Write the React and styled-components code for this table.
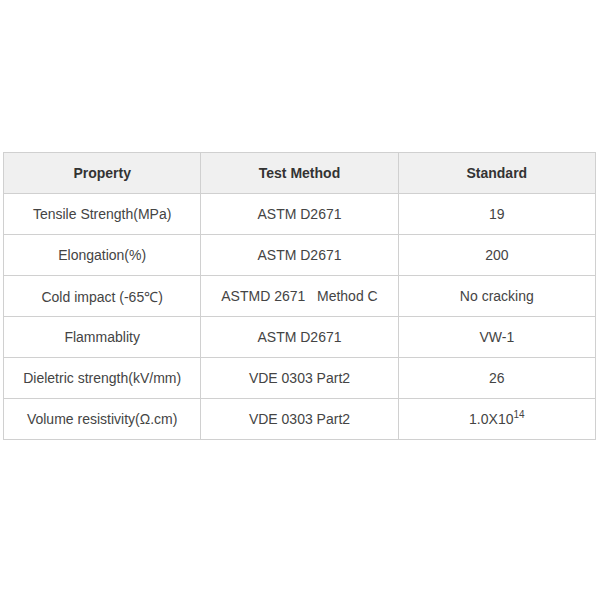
import React from "react";
import styled, { createGlobalStyle } from "styled-components";

const GlobalStyle = createGlobalStyle`
  body {
    margin: 0;
    background: #ffffff;
    font-family: "Liberation Sans", Arial, sans-serif;
  }
`;

const Page = styled.div`
  padding: 152px 5px 0 3px;
`;

const Table = styled.table`
  width: 593px;
  border-collapse: collapse;
  table-layout: fixed;
  font-size: 14px;
  color: #444444;
`;

const HeadCell = styled.th`
  height: 40px;
  padding: 0;
  border: 1px solid #d0d0d0;
  background: #f0f0f0;
  color: #333333;
  font-weight: bold;
  text-align: center;
`;

const Cell = styled.td`
  height: 40px;
  padding: 0;
  border: 1px solid #d0d0d0;
  text-align: center;
  white-space: pre;
`;

const Sup = styled.sup`
  font-size: 10px;
  line-height: 0;
  vertical-align: 6px;
`;

const rows = [
  ["Tensile Strength(MPa)", "ASTM D2671", "19"],
  ["Elongation(%)", "ASTM D2671", "200"],
  ["Cold impact (-65\u2103)", "ASTMD 2671\u00a0\u00a0\u00a0Method C", "No cracking"],
  ["Flammablity", "ASTM D2671", "VW-1"],
  ["Dieletric strength(kV/mm)", "VDE 0303 Part2", "26"],
  [
    "Volume resistivity(\u03a9.cm)",
    "VDE 0303 Part2",
    <>
      1.0X10<Sup>14</Sup>
    </>,
  ],
];

export default function App() {
  return (
    <>
      <GlobalStyle />
      <Page>
        <Table>
          <thead>
            <tr>
              <HeadCell>Property</HeadCell>
              <HeadCell>Test Method</HeadCell>
              <HeadCell>Standard</HeadCell>
            </tr>
          </thead>
          <tbody>
            {rows.map((r, i) => (
              <tr key={i}>
                <Cell>{r[0]}</Cell>
                <Cell>{r[1]}</Cell>
                <Cell>{r[2]}</Cell>
              </tr>
            ))}
          </tbody>
        </Table>
      </Page>
    </>
  );
}
